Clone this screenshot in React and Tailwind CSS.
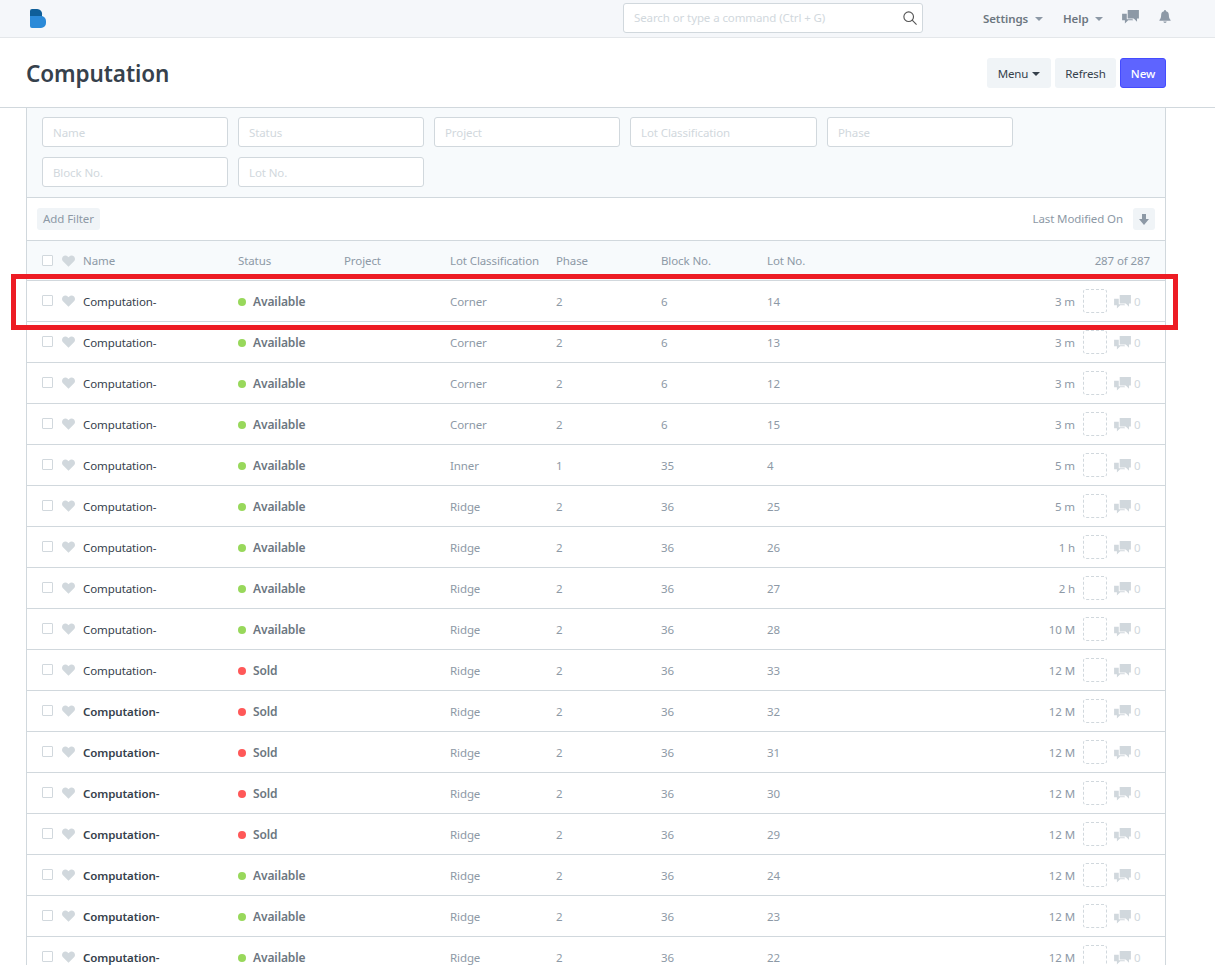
import React from 'react'

const F = "font-['Noto_Sans','Open_Sans',sans-serif] tracking-[-0.1px]"

const rows = [
  ['Available', 'Corner', '2', '6', '14', '3 m', false],
  ['Available', 'Corner', '2', '6', '13', '3 m', false],
  ['Available', 'Corner', '2', '6', '12', '3 m', false],
  ['Available', 'Corner', '2', '6', '15', '3 m', false],
  ['Available', 'Inner', '1', '35', '4', '5 m', false],
  ['Available', 'Ridge', '2', '36', '25', '5 m', false],
  ['Available', 'Ridge', '2', '36', '26', '1 h', false],
  ['Available', 'Ridge', '2', '36', '27', '2 h', false],
  ['Available', 'Ridge', '2', '36', '28', '10 M', false],
  ['Sold', 'Ridge', '2', '36', '33', '12 M', false],
  ['Sold', 'Ridge', '2', '36', '32', '12 M', true],
  ['Sold', 'Ridge', '2', '36', '31', '12 M', true],
  ['Sold', 'Ridge', '2', '36', '30', '12 M', true],
  ['Sold', 'Ridge', '2', '36', '29', '12 M', true],
  ['Available', 'Ridge', '2', '36', '24', '12 M', true],
  ['Available', 'Ridge', '2', '36', '23', '12 M', true],
  ['Available', 'Ridge', '2', '36', '22', '12 M', true],
]

const Heart = () => (
  <svg viewBox="0 0 16 14" className="w-[13px] h-[12px] fill-[#d1d8dd] shrink-0">
    <path d="M8 14 1.2 7.4C-.4 5.8-.4 3.2 1.2 1.5 2.900-.2 5.500-.2 7.100 1.500L8 2.400l.9-.9c1.600-1.700 4.200-1.700 5.900 0 1.600 1.700 1.600 4.300 0 5.900z" />
  </svg>
)

const Comment = ({ className }) => (
  <svg viewBox="0 0 18 15" className={className}>
    <path d="M6 0h12v9h-2v3.500L12.500 9H6z" />
    <path d="M0 4h5v6h6l1 1H6.500L3 14.500V11H0z" />
  </svg>
)

const Checkbox = ({ className = '' }) => (
  <span className={`w-[11px] h-[11px] border border-[#d1d8dd] rounded-[1px] bg-white shrink-0 ${className}`} />
)

const Input = ({ label, className }) => (
  <div className={`h-[30px] border border-[#d1d8dd] rounded-[3px] bg-white px-[10px] pt-[2px] flex items-center text-[11.5px] text-[#d1d8dd] ${className}`}>
    {label}
  </div>
)

const Row = ({ row }) => {
  const [status, lot, phase, block, lotNo, time, bold] = row
  return (
    <div className="h-[41px] border-b border-[#d1d8dd] flex items-center text-[11.5px] text-[#8d99a6] pt-[2px] pl-[15px] pr-[24px]">
      <Checkbox className="-mt-[4px]" />
      <span className="ml-[9px] -mt-[2px]"><Heart /></span>
      <span className={`ml-[8px] w-[155px] text-[#36414c] ${bold ? 'font-semibold' : ''}`}>Computation-</span>
      <span className="w-[106px] flex items-center text-[12px] text-[#6c7680] font-semibold">
        <span className={`w-2 h-2 rounded-full mr-[7px] ${status === 'Sold' ? 'bg-[#ff5858]' : 'bg-[#98d85b]'}`} />
        {status}
      </span>
      <span className="w-[106px]" />
      <span className="w-[106px]">{lot}</span>
      <span className="w-[105px]">{phase}</span>
      <span className="w-[106px]">{block}</span>
      <span className="w-[106px]">{lotNo}</span>
      <span className="ml-auto">{time}</span>
      <span className="ml-[8px] -mt-[2px] w-6 h-6 border border-dashed border-[#d1d8dd] rounded-[3px]" />
      <Comment className="ml-[7px] w-[17px] h-[14px] fill-[#d1d8dd]" />
      <span className="ml-[3px] text-[#d1d8dd] w-[7px]">0</span>
    </div>
  )
}

export default function App() {
  return (
    <div className={`relative h-[965px] overflow-hidden bg-white ${F}`}>
      {/* navbar */}
      <div className="h-[38px] bg-[#f5f7fa] border-b border-[#e4e7ea] flex items-center pl-[30px]">
        <svg viewBox="0 0 16 19" className="w-4 h-[19px] shrink-0">
          <path d="M0 2a2 2 0 0 1 2-2h5a5 5 0 0 1 5 6v2H0z" fill="#0f5f99" />
          <path d="M0 7h11a5 5 0 0 1 5 5v2a5 5 0 0 1-5 5H2a2 2 0 0 1-2-2z" fill="#2b8ad8" />
        </svg>
        <div className="ml-[577px] -mt-[2px] w-[300px] shrink-0 h-[30px] bg-white border border-[#d1d8dd] rounded-[3px] flex items-center justify-between pl-[10px] pr-[5px] text-[11.5px] text-[#d1d8dd]">
          Search or type a command (Ctrl + G)
          <svg viewBox="0 0 16 16" className="w-[14px] h-[14px] fill-none stroke-[#555] stroke-[1.300]">
            <circle cx="6.500" cy="6.500" r="5.500" />
            <path d="m10.500 10.500 5 5" />
          </svg>
        </div>
        <span className="ml-[60px] w-[47px] text-[11.5px] font-semibold text-[#6c7680]">Settings</span>
        <span className="ml-[5px] border-x-4 border-x-transparent border-t-4 border-t-[#8d99a6]" />
        <span className="ml-5 w-[27px] text-[11.5px] font-semibold text-[#6c7680]">Help</span>
        <span className="ml-[5px] border-x-4 border-x-transparent border-t-4 border-t-[#8d99a6]" />
        <Comment className="ml-[19px] -mt-[4px] w-[17px] h-[14px] fill-[#8d99a6]" />
        <svg viewBox="0 0 14 15" className="ml-[20px] -mt-[4px] w-[12px] h-[13px] fill-[#8d99a6]">
          <path d="M7 0a1.200 1.200 0 0 1 1.200 1.300C10.500 1.800 11.500 3.500 11.500 6c0 3 1 4.500 2 5.500v1H.5v-1c1-1 2-2.500 2-5.500 0-2.500 1-4.200 3.300-4.700A1.200 1.200 0 0 1 7 0zM5 13.300h4A2 2 0 0 1 7 15a2 2 0 0 1-2-1.700z" />
        </svg>
      </div>

      {/* page head */}
      <div className="h-[70px] border-b border-[#d1d8dd] flex items-center pl-[26px] pr-[49px]">
        <h1 className="text-[22.5px] pt-[3px] font-semibold text-[#36414c]">Computation</h1>
        <div className="ml-auto flex text-[11.5px]">
          <button className="h-[30px] w-[64px] pt-[2px] rounded-[3px] bg-[#f0f4f7] text-[#36414c] flex items-center justify-center">
            Menu <span className="ml-1 border-x-4 border-x-transparent border-t-4 border-t-[#36414c]" />
          </button>
          <button className="ml-[4px] h-[30px] w-[61px] pt-[2px] rounded-[3px] bg-[#f0f4f7] text-[#36414c]">Refresh</button>
          <button className="ml-[4px] h-[30px] w-[46px] pt-[2px] rounded-[3px] bg-[#5e64ff] border border-[#444bff] text-white font-medium">New</button>
        </div>
      </div>

      {/* list */}
      <div className="ml-[26px] w-[1140px] border-x border-[#d1d8dd]">
        <div className="h-[90px] bg-[#f7fafc] border-b border-[#d1d8dd] pt-[9px] pl-[15px]">
          <div className="flex gap-[10px]">
            <Input label="Name" className="w-[186px]" />
            <Input label="Status" className="w-[186px]" />
            <Input label="Project" className="w-[186px]" />
            <Input label="Lot Classification" className="w-[187px]" />
            <Input label="Phase" className="w-[186px]" />
          </div>
          <div className="flex gap-[10px] mt-[10px]">
            <Input label="Block No." className="w-[186px]" />
            <Input label="Lot No." className="w-[186px]" />
          </div>
        </div>

        <div className="h-[43px] border-b border-[#d1d8dd] flex items-center pl-[10px] pr-[10px] text-[11.5px] text-[#8d99a6]">
          <button className="h-[22px] w-[63px] rounded-[3px] bg-[#f0f4f7] text-[#8d99a6]">Add Filter</button>
          <span className="ml-auto">Last Modified On</span>
          <span className="ml-[10px] w-[22px] h-[22px] rounded-[3px] bg-[#f0f4f7] flex items-center justify-center">
            <svg viewBox="0 0 10 11" className="w-[10px] h-[11px] fill-[#8d99a6]">
              <path d="M3 0h4v5h3l-5 6-5-6h3z" />
            </svg>
          </span>
        </div>

        <div className="h-[40px] bg-[#f7fafc] border-b border-[#d1d8dd] flex items-center text-[11.5px] text-[#8d99a6] pl-[15px] pr-[15px]">
          <Checkbox />
          <span className="ml-[9px]"><Heart /></span>
          <span className="ml-[8px] w-[155px]">Name</span>
          <span className="w-[106px]">Status</span>
          <span className="w-[106px]">Project</span>
          <span className="w-[106px]">Lot Classification</span>
          <span className="w-[105px]">Phase</span>
          <span className="w-[106px]">Block No.</span>
          <span className="w-[106px]">Lot No.</span>
          <span className="ml-auto">287 of 287</span>
        </div>

        {rows.map((row) => (
          <Row key={row[4]} row={row} />
        ))}
      </div>

      {/* red highlight drawn over the first row */}
      <div className="absolute left-[11px] top-[274px] w-[1167px] h-[56px] border-[5px] border-[#ed1c24]" />
    </div>
  )
}
